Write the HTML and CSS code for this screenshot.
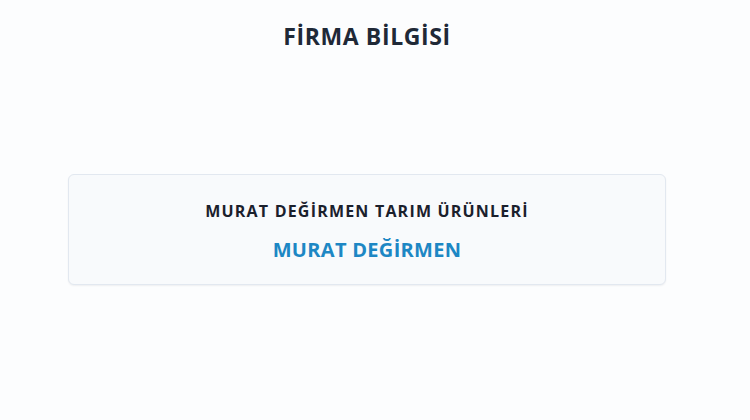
FILE: index.html
```html
<!DOCTYPE html>
<html lang="tr">
<head>
<meta charset="utf-8">
<link rel="stylesheet" href="styles.css">
</head>
<body>
<main class="page">
  <h1 class="title">FİRMA BİLGİSİ</h1>
  <section class="card">
    <div class="company">MURAT DEĞİRMEN TARIM ÜRÜNLERİ</div>
    <div class="owner">MURAT DEĞİRMEN</div>
  </section>
</main>
</body>
</html>
```
FILE: styles.css
```css
html, body {
  margin: 0;
  padding: 0;
  background: #fcfdfe;
}
body {
  font-family: "Open Sans", "Noto Sans", sans-serif;
  width: 750px;
  height: 420px;
  overflow: hidden;
}
.page {
  width: 734px;
  padding-top: 21px;
  box-sizing: border-box;
}
.title {
  margin: 0;
  text-align: center;
  font-size: 23px;
  line-height: 30px;
  font-weight: 700;
  color: #1f2937;
  letter-spacing: 0.6px;
}
.card {
  margin: 123px 68px 0;
  height: 111px;
  box-sizing: border-box;
  background: #f8fafc;
  border: 1px solid #e2e8f0;
  border-radius: 6px;
  box-shadow: 0 1px 2px rgba(15, 23, 42, 0.06);
  padding-top: 26px;
  text-align: center;
}
.company {
  font-size: 16px;
  line-height: 20px;
  font-weight: 700;
  color: #1a202c;
  letter-spacing: 1.2px;
}
.owner {
  margin-top: 16px;
  font-size: 20px;
  line-height: 26px;
  font-weight: 700;
  color: #1d87c4;
  letter-spacing: 0.3px;
}
```
